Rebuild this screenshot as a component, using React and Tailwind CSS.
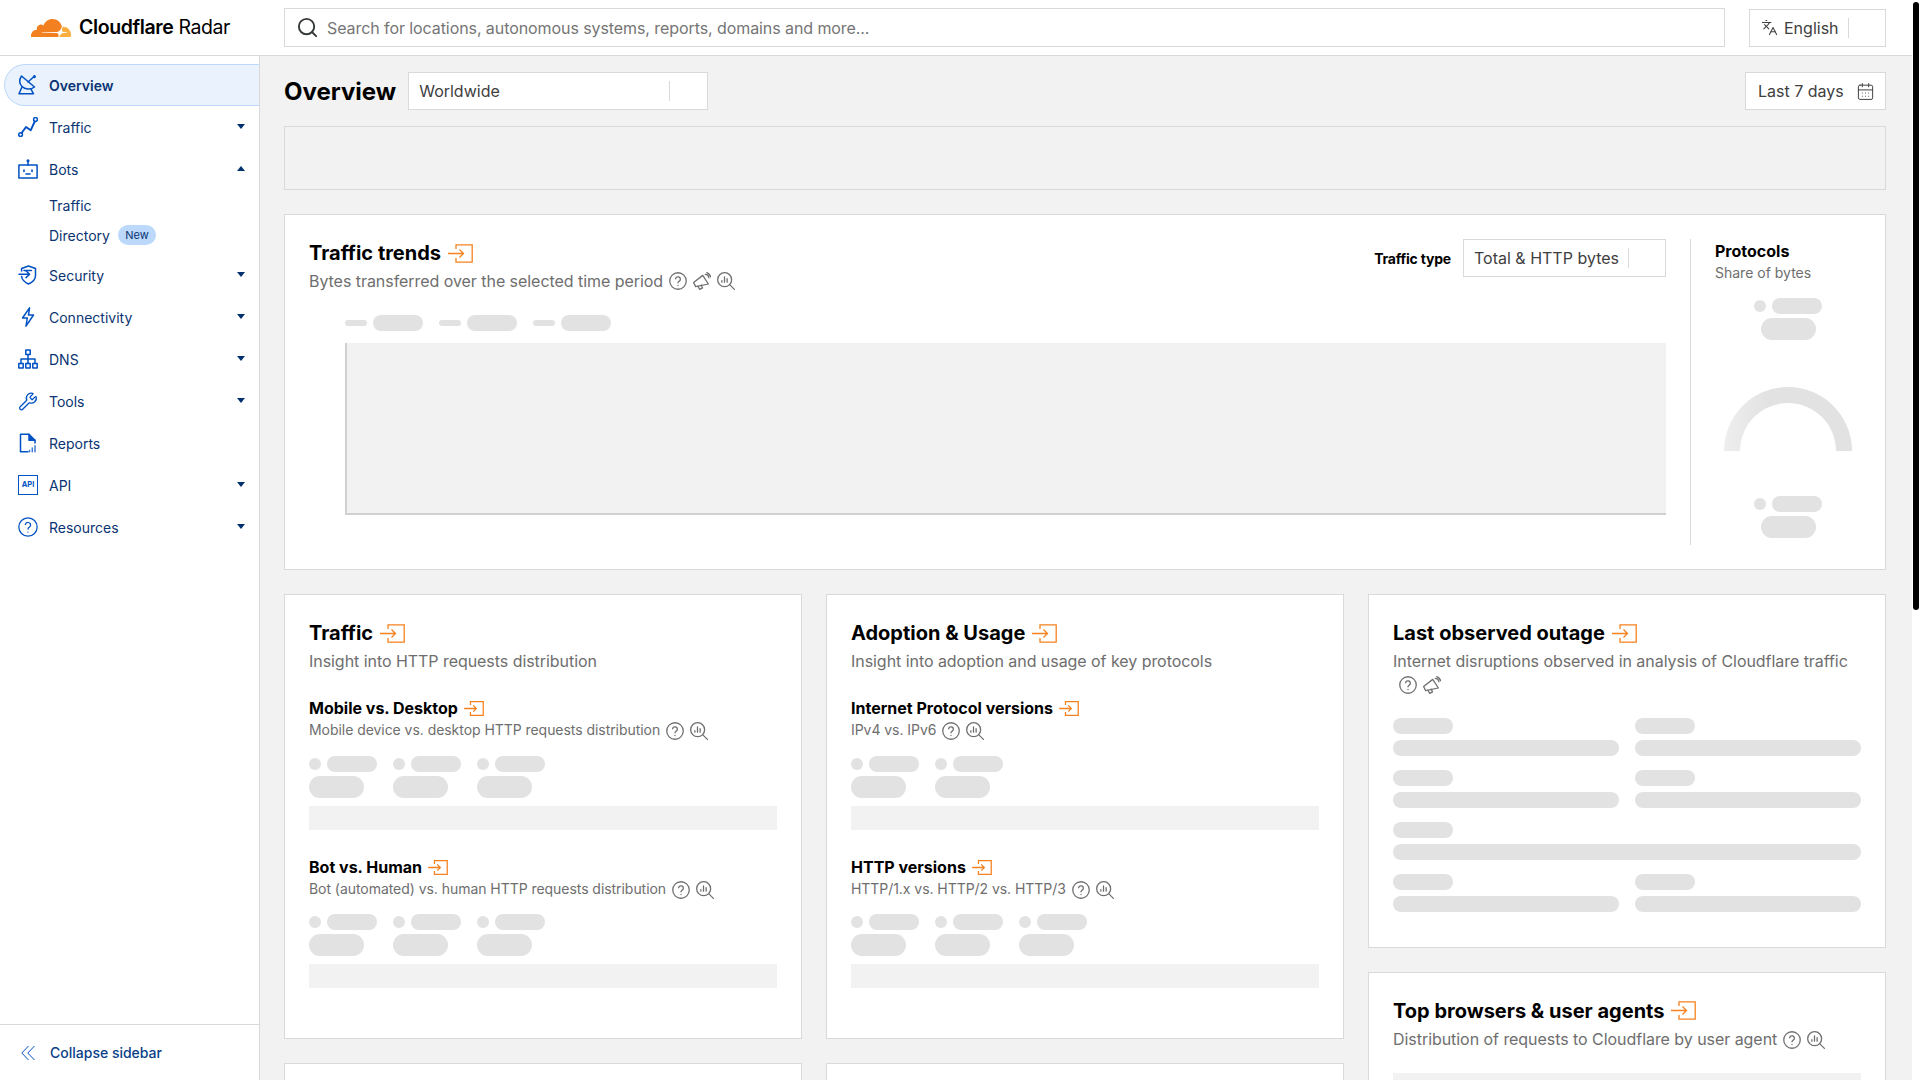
import React from "react";
import { Search, Languages, CalendarDays, Wrench } from "lucide-react";

const Ic = ({ children, size = 20, className = "", vb = "0 0 20 20", sw = 1.5 }) => (
  <svg width={size} height={size} viewBox={vb} fill="none" stroke="currentColor" strokeWidth={sw} strokeLinecap="round" strokeLinejoin="round" className={"shrink-0 " + className}>
    {children}
  </svg>
);

const DishI = () => (
  <Ic>
    <path d="M3.5 1C1 5 1.5 9 4 11.5c3 3 8.5 3.5 12.5.5Z" />
    <path d="M10 7l5.5-5" />
    <circle cx="16.4" cy="1.6" r=".8" />
    <path d="M4 12 1 18.8h14.5L13 14.2" />
  </Ic>
);
const TrafficI = () => (
  <Ic>
    <circle cx="2.6" cy="17.6" r="1.9" />
    <circle cx="17.5" cy="2.5" r="1.9" />
    <path d="M3.6 16 8 10l4.7 3.3L16.7 4.5" strokeWidth="1.9" />
  </Ic>
);
const BotI = () => (
  <Ic>
    <rect x=".9" y="6" width="18.2" height="13" />
    <path d="M10 6V2.5" />
    <circle cx="10" cy="1.8" r=".8" fill="currentColor" />
    <path d="M6 11v1.5M14 11v1.5M8 15h4" strokeWidth="1.6" />
  </Ic>
);
const ShieldI = () => (
  <Ic>
    <path d="M3.6 6V3.5L10.5 1l7 2.5v7c0 4-3.2 6.8-7 8.5-3.5-1.6-6.4-4-6.9-7.5" />
    <path d="M1 9.2h10.5M8 5.8l3.6 3.4L8 12.6" />
    <path d="M6 5.5h7.5" />
  </Ic>
);
const BoltI = () => (
  <Ic>
    <path d="M11.5.8 4.5 11h4.8L8 19.2 15.5 8h-5l1-7.2Z" />
  </Ic>
);
const DnsI = () => (
  <Ic>
    <rect x="7.8" y="1" width="4.4" height="4.4" />
    <rect x=".8" y="14.6" width="4.4" height="4.4" />
    <rect x="7.8" y="14.6" width="4.4" height="4.4" />
    <rect x="14.8" y="14.6" width="4.4" height="4.4" />
    <path d="M10 5.4v9.2M3 14.6V10h14v4.6" />
  </Ic>
);
const ReportI = () => (
  <Ic>
    <path d="M10 18.8H2.5V1.2h8.5l6 6V10" />
    <path d="M11 1.2v6h6" fill="currentColor" />
    <path d="M11.5 18.8v-1.5M14.3 18.8v-3.8M17 18.8v-6" strokeWidth="1.5" opacity=".75" />
  </Ic>
);
const HelpI = ({ size = 20, className = "", sw = 1.5 }) => (
  <svg width={size} height={size} viewBox="0 0 24 24" fill="none" stroke="currentColor" strokeWidth={sw} strokeLinecap="round" strokeLinejoin="round" className={"shrink-0 " + className}>
    <circle cx="12" cy="12" r="11" />
    <path d="M8.8 9a3.2 3.2 0 0 1 6.3 1c0 2.2-3.1 2.6-3.1 4.4" />
    <path d="M12 18h.01" />
  </svg>
);

const Nav = ({ icon, label, chev, active }) => (
  <div className={active ? "ml-1 h-[42px] flex items-center pl-[13px] gap-[11px] rounded-l-full bg-[#e9f2fd] border border-r-0 border-[#bcd8fb] font-semibold" : "h-[42px] flex items-center pl-[18px] gap-[11px]"}>
    <span className="text-[#0051c3] w-5 h-5 flex items-center justify-center shrink-0">{icon}</span>
    <span>{label}</span>
    {chev && (
      <svg width="8" height="5" viewBox="0 0 8 5" className={"ml-auto mr-[14px] -mt-0.5 " + (chev === "up" ? "rotate-180" : "")}>
        <path d="M0 0h8L4 5Z" fill="#00306e" />
      </svg>
    )}
  </div>
);

const Sidebar = () => (
  <aside className="w-[260px] shrink-0 border-r border-[#d9d9d9] bg-white flex flex-col justify-between text-[14px] text-[#0a3472]">
    <nav className="pt-2">
      <Nav active icon={<DishI />} label="Overview" />
      <Nav icon={<TrafficI />} label="Traffic" chev="down" />
      <Nav icon={<BotI />} label="Bots" chev="up" />
      <div className="mb-1">
        <div className="h-[30px] pl-[49px] flex items-center">Traffic</div>
        <div className="h-[30px] pl-[49px] flex items-center">
          Directory
          <span className="ml-2 w-[38px] h-5 rounded-full bg-[#bcd8fb] text-[11px] flex items-center justify-center">New</span>
        </div>
      </div>
      <Nav icon={<ShieldI />} label="Security" chev="down" />
      <Nav icon={<BoltI />} label="Connectivity" chev="down" />
      <Nav icon={<DnsI />} label="DNS" chev="down" />
      <Nav icon={<Wrench size={21} strokeWidth={1.5} />} label="Tools" chev="down" />
      <Nav icon={<ReportI />} label="Reports" />
      <Nav
        icon={<span className="w-5 h-5 border-[1.5px] border-[#0051c3] flex items-center justify-center text-[7.5px] leading-none font-bold">API</span>}
        label="API"
        chev="down"
      />
      <Nav icon={<HelpI />} label="Resources" chev="down" />
    </nav>
    <div className="h-14 border-t border-[#d9d9d9] flex items-center pl-[21px] gap-[15px] font-medium text-[#0a3f8a]">
      <svg width="14" height="16" viewBox="0 0 14 16" fill="none" stroke="#0051c3" strokeWidth="1" className="shrink-0">
        <path d="M7.5 1 .8 8l6.7 7M13.5 1 6.8 8l6.7 7" />
      </svg>
      <span>Collapse sidebar</span>
    </div>
  </aside>
);

const Go = ({ small }) => (
  <svg width={small ? 20 : 25} height={small ? 15 : 19} viewBox="0 0 25 19" fill="none" stroke="#f6821f" strokeWidth={small ? 1.6 : 1.3} className="shrink-0">
    <path d="M8 5V.8h16.2v17.4H8V14" />
    <path d="M0 9.5h15.5M11.5 5.5l4 4-4 4" />
  </svg>
);

const Mega = () => (
  <Ic size={18} vb="0 0 24 24" sw={1.7}>
    <path d="M13 4.5 20.5 16 3.5 19.5 .8 14Z" />
    <path d="M6.5 19 9 23.2l3.7-2-1.7-3.7" />
    <path d="M16.5 3.2a5 5 0 0 1 4.7 4.5M18.5.8a8.5 8.5 0 0 1 5 5.5" />
  </Ic>
);
const Lens = () => (
  <Ic size={18} vb="0 0 24 24" sw={1.7}>
    <circle cx="10.2" cy="10.2" r="9.3" />
    <path d="m16.8 16.8 6.4 6.4" />
    <path d="M6.5 13.5v-2M10 13.5V6.5M13.5 13.5V9" />
  </Ic>
);

const Tools = ({ mega, lens = true, className = "" }) => (
  <span className={"inline-flex items-center gap-[6px] ml-[6px] h-4 align-middle text-[#6e6e6e] " + className}>
    <HelpI size={18} sw={1.7} />
    {mega && <Mega />}
    {lens && <Lens />}
  </span>
);

const Sk = ({ className }) => <div className={"bg-[#e2e2e2] rounded-full " + className} />;

const Legend = ({ cols, first }) => (
  <div className={"flex " + (first ? "mt-4" : "mt-[15px]")}>
    {Array.from({ length: cols }).map((_, i) => (
      <div key={i} className="w-[84px]">
        <div className="flex items-center gap-[6px]">
          <Sk className="w-3 h-3" />
          <Sk className="w-[50px] h-4" />
        </div>
        <Sk className="w-[55px] h-[22px] mt-1" />
      </div>
    ))}
  </div>
);

const Card = ({ className = "", children }) => (
  <div className={"bg-white border border-[#d9d9d9] p-6 " + className}>{children}</div>
);

const CardHead = ({ title, desc, extra }) => (
  <>
    <div className="flex items-center gap-[7px] h-7">
      <h2 className="text-[20px] leading-7 font-bold text-black whitespace-nowrap">{title}</h2>
      <Go />
    </div>
    <p className="mt-0.5 text-[16px] leading-6 tracking-[-0.05px] text-[#6e6e6e]">
      {desc}
      {extra}
    </p>
  </>
);

const Section = ({ title, desc, cols, first, mega }) => (
  <div className={first ? "mt-[23px]" : "mt-[25px]"}>
    <div className="flex items-center gap-[6px] h-6">
      <h3 className="text-[16px] leading-6 font-bold text-black">{title}</h3>
      <Go small />
    </div>
    <p className="text-[14px] leading-5 tracking-[-0.05px] text-[#6e6e6e] flex items-center">
      {desc}
      <Tools mega={mega} className="translate-y-px" />
    </p>
    <Legend cols={cols} first={first} />
    <div className="h-6 mt-2 bg-[#f2f2f2]" />
  </div>
);

const SelectBox = ({ label, className = "", sep }) => (
  <div className={"bg-white border border-[#d9d9d9] flex items-center text-[16px] text-[#404040] " + className}>
    <span className="pl-[10px] whitespace-nowrap">{label}</span>
    <span className={"w-px h-5 bg-[#d9d9d9] " + sep} />
  </div>
);

const Stat = () => (
  <div className="flex flex-col items-center">
    <div className="flex items-center gap-[6px]">
      <Sk className="w-3 h-3" />
      <Sk className="w-[50px] h-4" />
    </div>
    <Sk className="w-[55px] h-[22px] mt-1" />
  </div>
);

const Outage = () => (
  <div>
    <Sk className="w-[60px] h-4" />
    <Sk className="w-full h-4 mt-[6px]" />
  </div>
);

const TrendsCard = () => (
  <Card className="mt-6 h-[356px] flex">
    <div className="flex-1 min-w-0">
      <div className="flex justify-between">
        <div>
          <div className="flex items-center gap-[7px] h-7">
            <h2 className="text-[20px] leading-7 font-bold text-black">Traffic trends</h2>
            <Go />
          </div>
          <p className="mt-0.5 text-[16px] leading-6 tracking-[-0.05px] text-[#6e6e6e] flex items-center">
            Bytes transferred over the selected time period
            <Tools mega />
          </p>
        </div>
        <div className="flex items-center h-[38px] gap-3">
          <span className="text-[14px] font-bold tracking-[-0.2px] text-black">Traffic type</span>
          <SelectBox label="Total & HTTP bytes" className="w-[203px] h-[38px]" sep="ml-[9px]" />
        </div>
      </div>
      <div className="pl-9">
        <div className="flex items-center h-4 gap-4 mt-[22px]">
          {[0, 1, 2].map((i) => (
            <div key={i} className="flex items-center gap-[6px]">
              <Sk className="w-[22px] h-[6px]" />
              <Sk className="w-[50px] h-4" />
            </div>
          ))}
        </div>
        <div className="mt-3 h-[172px] bg-[#f2f2f2] border-l-2 border-b-2 border-[#d0d0d0]" />
      </div>
    </div>
    <div className="ml-6 w-[171px] shrink-0 border-l border-[#d9d9d9] pl-6">
      <h3 className="text-[16px] leading-6 font-bold text-black">Protocols</h3>
      <p className="text-[14px] leading-5 text-[#6e6e6e]">Share of bytes</p>
      <div className="mt-[15px]">
        <Stat />
      </div>
      <div className="mt-[47px] flex justify-center">
        <svg width="128" height="64" viewBox="0 0 128 64">
          <defs>
            <linearGradient id="sh" x1="0" x2="1" y1="0" y2="0">
              <stop offset="0" stopColor="#eeeeee" />
              <stop offset=".35" stopColor="#e2e2e2" />
            </linearGradient>
          </defs>
          <path d="M0 64a64 64 0 0 1 128 0h-16a48 48 0 0 0-96 0Z" fill="url(#sh)" />
        </svg>
      </div>
      <div className="mt-[45px]">
        <Stat />
      </div>
    </div>
  </Card>
);

export default function App() {
  return (
    <div className="relative h-screen overflow-hidden bg-[#f2f2f2] font-[Inter,sans-serif] flex flex-col">
      <div className="mr-2 flex flex-col flex-1 min-h-0">
        <header className="h-14 shrink-0 bg-white border-b border-[#d9d9d9] flex items-center pr-[26px]">
          <div className="w-[284px] shrink-0 flex items-center pl-[31px] gap-2">
            <svg width="40" height="20" viewBox="0 6 24 12" className="shrink-0">
              <path fill="#f38020" d="M16.5088 16.8447c.1475-.5068.0908-.9707-.1553-1.3154-.2246-.3164-.6045-.499-1.0615-.5205l-8.6592-.1123a.1559.1559 0 0 1-.1333-.0713c-.0283-.042-.0351-.0986-.021-.1553.0278-.084.1123-.1484.2036-.1562l8.7359-.1123c1.0351-.0489 2.1601-.8868 2.5537-1.9136l.499-1.3013c.0215-.0561.0293-.1128.0147-.168-.5625-2.5463-2.835-4.4453-5.5499-4.4453-2.5039 0-4.6284 1.6177-5.3876 3.8614-.4927-.3658-1.1187-.5625-1.794-.499-1.2026.119-2.1665 1.083-2.2861 2.2856-.0283.31-.0069.6128.0635.894C1.5683 13.171 0 14.7754 0 16.752c0 .1748.0142.3515.0352.5273.0141.083.0844.1475.1689.1475h15.9814c.0909 0 .1758-.0645.2032-.1553l.12-.4268z" />
              <path fill="#faae40" d="M19.2656 11.2813c-.0771 0-.1611 0-.2383.0112-.0566 0-.1054.0415-.127.0976l-.3378 1.1744c-.1475.5068-.0918.9707.1543 1.3164.2256.3164.6055.498 1.0625.5195l1.8437.1133c.0557 0 .1055.0263.1329.0703.0283.043.0351.1074.0214.1562-.0283.084-.1132.1485-.204.1553l-1.921.1123c-1.041.0488-2.1582.8867-2.5527 1.914l-.1406.3585c-.0283.0713.0215.1416.0986.1416h6.5977c.0771 0 .1474-.0489.169-.126.1122-.4082.1757-.837.1757-1.2803 0-2.6025-2.125-4.727-4.7344-4.727" />
            </svg>
            <span className="text-[19.5px] tracking-[-0.02em] text-black whitespace-nowrap">
              <span className="font-semibold">Cloudflare</span> Radar
            </span>
          </div>
          <div className="flex-1 h-[39px] bg-white border border-[#d9d9d9] flex items-center pl-[11px] gap-2 text-[16px] tracking-[-0.08px] text-[#757575]">
            <Search size={23} strokeWidth={2} className="text-[#36393a] shrink-0" />
            <span>Search for locations, autonomous systems, reports, domains and more...</span>
          </div>
          <div className="ml-6 w-[137px] h-[38px] bg-white border border-[#d9d9d9] flex items-center pl-[11px] text-[16px] text-[#404040]">
            <Languages size={17} strokeWidth={1.5} className="shrink-0" />
            <span className="ml-[6px]">English</span>
            <span className="ml-[9px] w-px h-5 bg-[#d9d9d9]" />
          </div>
        </header>
        <div className="flex flex-1 min-h-0">
          <Sidebar />
          <main className="flex-1 min-w-0 pl-6 pr-[26px] pt-4 overflow-hidden">
            <div className="flex items-center h-[38px]">
              <h1 className="text-[24px] leading-8 font-bold text-black mt-0.5">Overview</h1>
              <SelectBox label="Worldwide" className="ml-3 w-[300px] h-[38px] justify-between" sep="mr-[37px]" />
              <div className="ml-auto w-[141px] h-[38px] bg-white border border-[#d9d9d9] flex items-center pl-3 text-[16px] text-[#404040]">
                <span>Last 7 days</span>
                <CalendarDays size={19} strokeWidth={1.25} className="ml-3" />
              </div>
            </div>
            <div className="mt-4 h-16 border border-[#d9d9d9] bg-[#f2f2f2]" />
            <TrendsCard />
            <div className="mt-6 grid grid-cols-3 gap-6">
              <div className="flex flex-col gap-6">
                <Card className="h-[445px]">
                  <CardHead title="Traffic" desc="Insight into HTTP requests distribution" />
                  <Section first title="Mobile vs. Desktop" desc="Mobile device vs. desktop HTTP requests distribution" cols={3} />
                  <Section title="Bot vs. Human" desc="Bot (automated) vs. human HTTP requests distribution" cols={3} />
                </Card>
                <Card className="h-[300px]" />
              </div>
              <div className="flex flex-col gap-6">
                <Card className="h-[445px]">
                  <CardHead title="Adoption & Usage" desc="Insight into adoption and usage of key protocols" />
                  <Section first title="Internet Protocol versions" desc="IPv4 vs. IPv6" cols={2} />
                  <Section title="HTTP versions" desc="HTTP/1.x vs. HTTP/2 vs. HTTP/3" cols={3} />
                </Card>
                <Card className="h-[300px]" />
              </div>
              <div className="flex flex-col gap-6">
                <Card className="h-[353.5px]">
                  <CardHead title="Last observed outage" desc="Internet disruptions observed in analysis of Cloudflare traffic" extra={<Tools mega lens={false} className="-translate-y-[2px]" />} />
                  <div className="mt-[21px] grid grid-cols-2 gap-x-4 gap-y-[14px]">
                    <Outage />
                    <Outage />
                    <Outage />
                    <Outage />
                    <div className="col-span-2">
                      <Outage />
                    </div>
                    <Outage />
                    <Outage />
                  </div>
                </Card>
                <Card className="h-[300px]">
                  <CardHead title="Top browsers & user agents" desc="Distribution of requests to Cloudflare by user agent" extra={<Tools />} />
                  <div className="mt-[22px] h-40 bg-[#f2f2f2]" />
                </Card>
              </div>
            </div>
          </main>
        </div>
      </div>
      <div className="absolute right-0 top-0 bottom-0 w-2 bg-white">
        <div className="absolute left-px top-[2px] w-[6px] h-[608px] rounded-[3px] bg-black" />
      </div>
    </div>
  );
}
